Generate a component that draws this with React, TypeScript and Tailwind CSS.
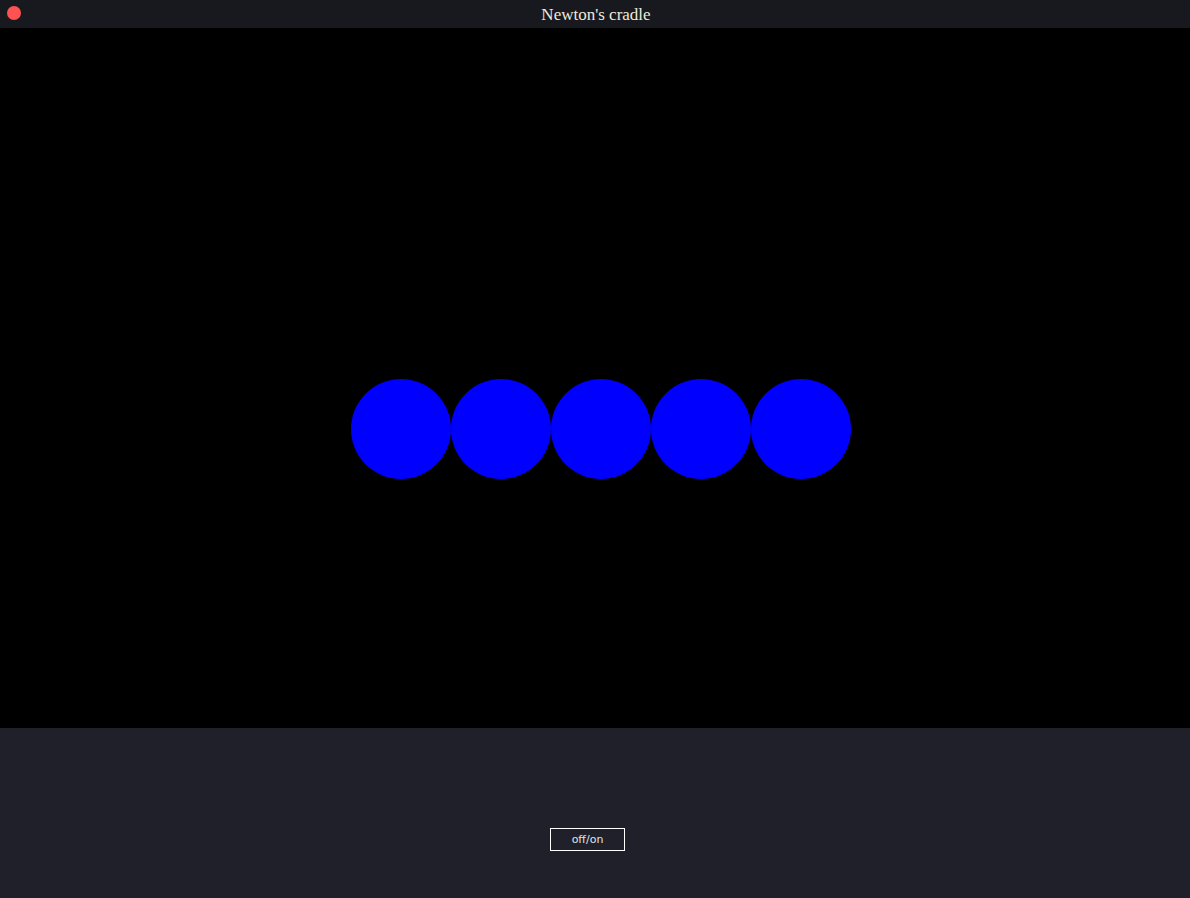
import React, { useState } from "react";

const balls = [401, 501, 601, 701, 801];

const App: React.FC = () => {
  const [running, setRunning] = useState(false);

  return (
    <div className="w-[1190px] h-[898px] flex flex-col bg-[#20202a]">
      <div className="h-[28px] bg-[#18191e] flex items-center relative">
        <span className="absolute left-[7px] top-[6px] w-[14px] h-[14px] rounded-full bg-[#ff5252]" />
        <div
          className="flex-1 text-center text-[17px] leading-none text-[#eeeadb] pl-[2px]"
          style={{ fontFamily: '"Liberation Serif", serif' }}
        >
          Newton's cradle
        </div>
      </div>

      <div className="h-[700px] bg-black">
        <svg width="1190" height="700" viewBox="0 0 1190 700">
          {balls.map((cx) => (
            <circle key={cx} cx={cx} cy={401} r={50} fill="#0000ff" />
          ))}
        </svg>
      </div>

      <div className="flex-1 flex justify-center pt-[100px]">
        <button
          onClick={() => setRunning(!running)}
          className="mr-[15px] w-[75px] h-[23px] pt-[1px] border border-white text-[11px] text-[#dbe6f2] bg-[#20202a]"
          style={{ fontFamily: '"DejaVu Sans", sans-serif' }}
        >
          off/on
        </button>
      </div>
    </div>
  );
};

export default App;
